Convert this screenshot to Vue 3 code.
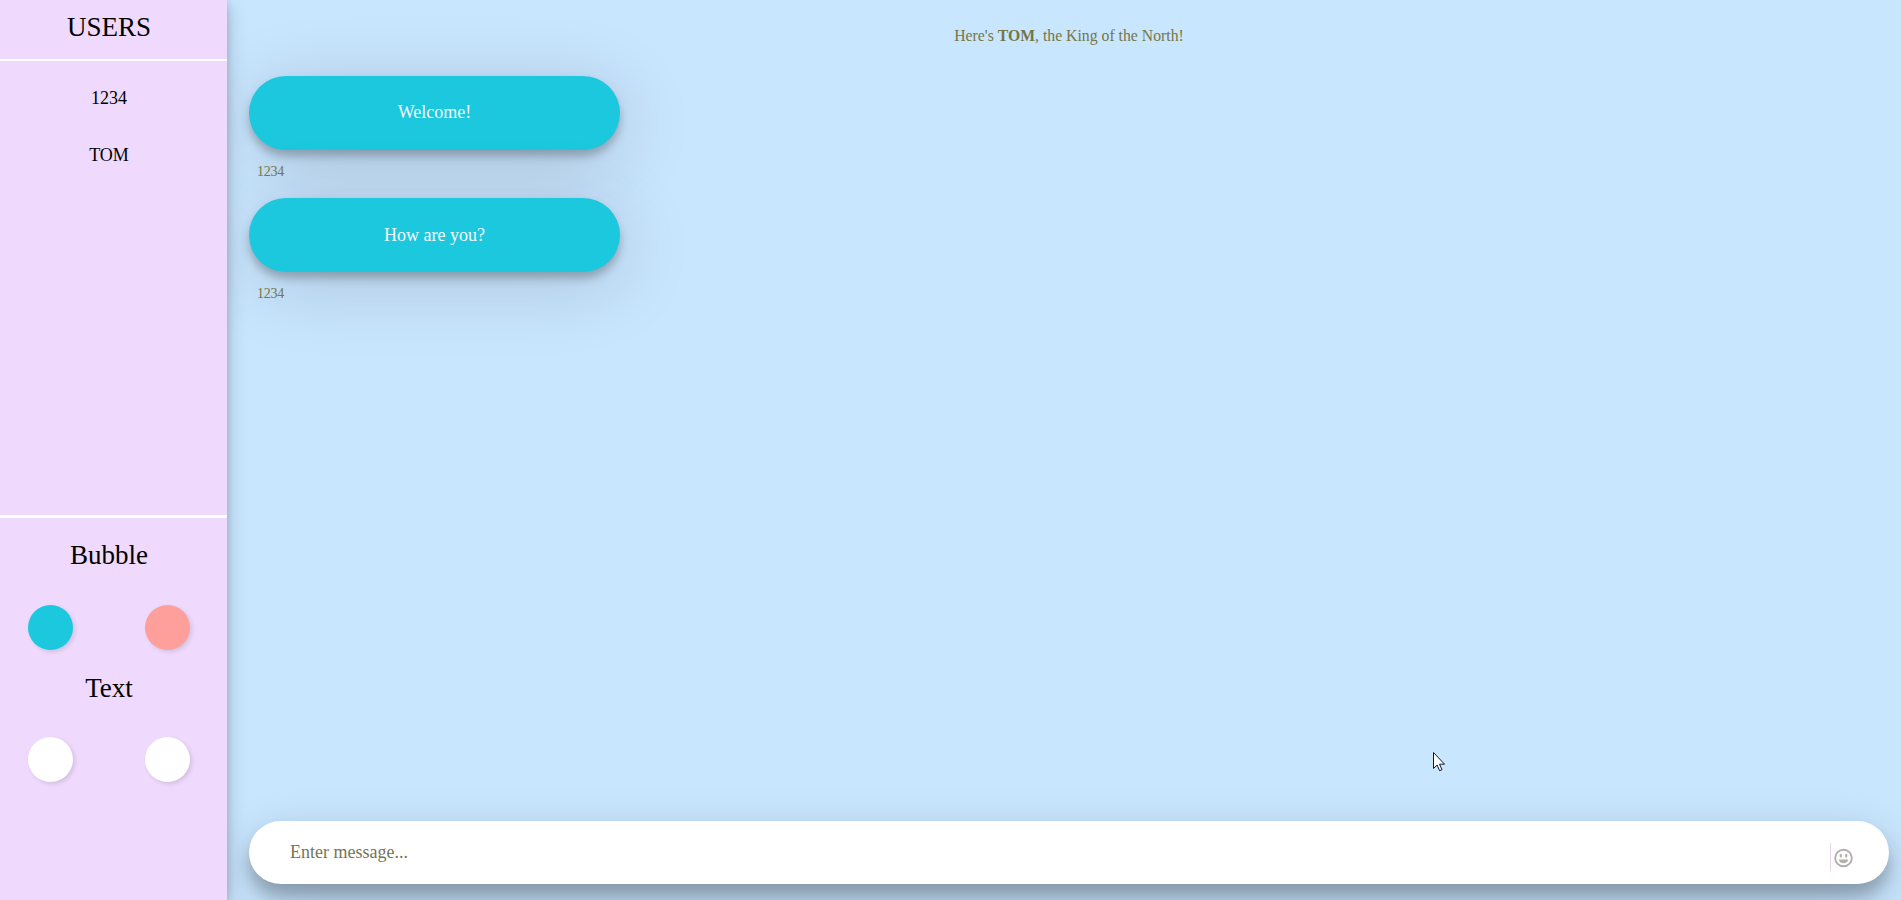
<script setup>
const users = ['1234', 'TOM']
const messages = [
  { id: 1, text: 'Welcome!', author: '1234' },
  { id: 2, text: 'How are you?', author: '1234' },
]
</script>

<template>
  <div class="chat">
    <aside class="sidebar">
      <h2 class="users-title">USERS</h2>
      <ul class="users">
        <li v-for="user in users" :key="user">{{ user }}</li>
      </ul>
      <section class="settings">
        <h2 class="settings-title">Bubble</h2>
        <div class="swatches">
          <button class="swatch cyan" aria-label="Cyan bubble"></button>
          <button class="swatch pink" aria-label="Pink bubble"></button>
        </div>
        <h2 class="settings-title second">Text</h2>
        <div class="swatches text-swatches">
          <button class="swatch white" aria-label="White text"></button>
          <button class="swatch white" aria-label="White text"></button>
        </div>
      </section>
    </aside>

    <main class="room">
      <p class="notice">Here's <b>TOM</b>, the King of the North!</p>
      <div class="messages">
        <article v-for="m in messages" :key="m.id" class="message">
          <div class="bubble">{{ m.text }}</div>
          <div class="author">{{ m.author }}</div>
        </article>
      </div>
      <div class="composer">
        <span class="placeholder">Enter message...</span>
        <span class="emoji">
          <svg width="20" height="20" viewBox="0 0 20 20">
            <circle cx="9.500" cy="10" r="8.3" fill="none" stroke="#b3adb2" stroke-width="1.9" />
            <ellipse cx="6.8" cy="7.7" rx="1.25" ry="2" fill="#b3b5ae" />
            <ellipse cx="12.2" cy="7.7" rx="1.25" ry="2" fill="#b3b5ae" />
            <path d="M4.700 11.6h9.6c-.5 2.4-2.4 3.7-4.8 3.7s-4.300-1.300-4.800-3.700z" fill="#aeb2a8" />
          </svg>
        </span>
      </div>
    </main>

    <svg class="cursor" width="13" height="20" viewBox="0 0 13 20">
      <path d="M.5.500v16l3.600-3.500 2.500 5.700 2.400-1-2.500-5.500h5z" fill="#fff" stroke="#15152a" stroke-width="1" />
    </svg>
  </div>
</template>

<style>
body {
  margin: 0;
  overflow: hidden;
}
</style>

<style scoped>
.chat {
  position: relative;
  display: flex;
  width: 100vw;
  height: 100vh;
  overflow: hidden;
  background: #c9e6ff;
  font-family: "Liberation Serif", "Times New Roman", serif;
  color: #000;
}
.sidebar {
  z-index: 1;
  display: flex;
  flex-direction: column;
  flex: none;
  width: 227px;
  background: #efdafd;
  box-shadow: 0 4px 8px rgba(0, 0, 0, 0.16), 0 6px 20px rgba(0, 0, 0, 0.19);
  text-align: center;
}
.users-title,
.settings-title {
  margin: 0;
  padding-right: 9px;
  font-size: 27px;
  line-height: 31px;
  font-weight: 400;
}
.users-title {
  box-sizing: border-box;
  height: 61px;
  padding-top: 12px;
  border-bottom: 2px solid #fff;
}
.users {
  flex: none;
  box-sizing: border-box;
  height: 454px;
  margin: 0;
  padding: 27px 9px 0 0;
  list-style: none;
  font-size: 18px;
  line-height: 21px;
}
.users li {
  margin-bottom: 36px;
}
.settings {
  flex: 1;
  border-top: 3px solid #fff;
  padding-top: 22px;
}
.swatches {
  display: flex;
  gap: 72px;
  padding: 34px 0 0 28px;
}
.text-swatches {
  padding-top: 33px;
}
.settings-title.second {
  margin-top: 23px;
}
.swatch {
  width: 45px;
  height: 45px;
  padding: 0;
  border: 0;
  border-radius: 50%;
  box-shadow: 2px 2px 4px rgba(0, 0, 0, 0.12);
}
.cyan {
  background: #1bc8dd;
}
.pink {
  background: #ff9f9b;
}
.white {
  background: #fff;
}
.room {
  display: flex;
  flex-direction: column;
  flex: 1;
  padding: 27px 12px 16px 22px;
}
.notice {
  margin: 0;
  height: 49px;
  font-size: 15.75px;
  line-height: 18px;
  text-align: center;
  color: #757547;
}
.messages {
  flex: 1;
}
.message {
  height: 122px;
}
.bubble {
  width: 371px;
  height: 74px;
  border-radius: 37px;
  background: #1bc8dd;
  box-shadow: 0 6px 10px rgba(0, 0, 0, 0.25), 4px 12px 76px rgba(0, 0, 0, 0.16);
  color: #f4f8fb;
  font-size: 18px;
  line-height: 74px;
  text-align: center;
}
.message:first-child .bubble {
  line-height: 72px;
}
.author {
  padding: 14px 0 0 8px;
  font-size: 14px;
  line-height: 16px;
  letter-spacing: -0.25px;
  color: #757547;
}
.composer {
  display: flex;
  justify-content: space-between;
  box-sizing: border-box;
  height: 63px;
  padding: 0 35px 0 41px;
  border-radius: 32px;
  background: #fff;
  box-shadow: 0 12px 16px rgba(0, 0, 0, 0.22), 0 17px 50px rgba(0, 0, 0, 0.19);
}
.placeholder {
  font-size: 18px;
  line-height: 63px;
  color: #757557;
}
.emoji {
  display: flex;
  align-items: center;
  height: 28px;
  margin-top: 22px;
  padding-left: 3px;
  border-left: 1px solid #e6d5e3;
}
.emoji svg {
  margin-top: 1px;
}
.cursor {
  position: absolute;
  left: 1433px;
  top: 752px;
}
</style>
